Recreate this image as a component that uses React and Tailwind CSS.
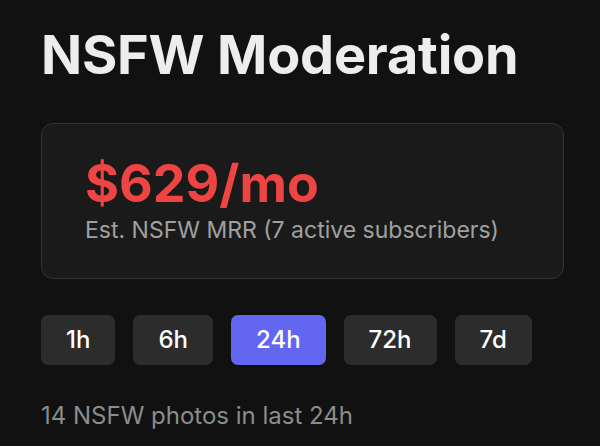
const ranges = ["1h", "6h", "24h", "72h", "7d"];

export default function App() {
  const active = "24h";
  return (
    <div className="min-h-[446px] w-[600px] bg-[#111111] px-[41px] pt-[23px] font-['Inter',sans-serif] text-[#ededed]">
      <h1 className="text-[54px] font-bold leading-[64px] tracking-[-0.2px]">NSFW Moderation</h1>

      <div className="mt-[36px] w-[523px] rounded-[12px] border border-[#353535] bg-[#1a1a1a] px-[43px] pt-[32px] pb-[33px]">
        <div className="text-[52px] font-bold leading-[56px] text-[#ef4444]">$629/mo</div>
        <div className="mt-[3px] text-[23px] leading-[30px] text-[#a0a0a0]">
          Est. NSFW MRR (7 active subscribers)
        </div>
      </div>

      <div className="mt-[36px] flex gap-[18px]">
        {ranges.map((r) => (
          <button
            key={r}
            className={
              "h-[50px] rounded-[7px] px-[25px] text-[24px] font-medium text-white " +
              (r === active ? "bg-[#6366f1]" : "bg-[#2c2c2c]")
            }
          >
            {r}
          </button>
        ))}
      </div>

      <p className="mt-[36px] text-[24px] leading-[30px] text-[#8c8c8c]">14 NSFW photos in last 24h</p>
    </div>
  );
}
